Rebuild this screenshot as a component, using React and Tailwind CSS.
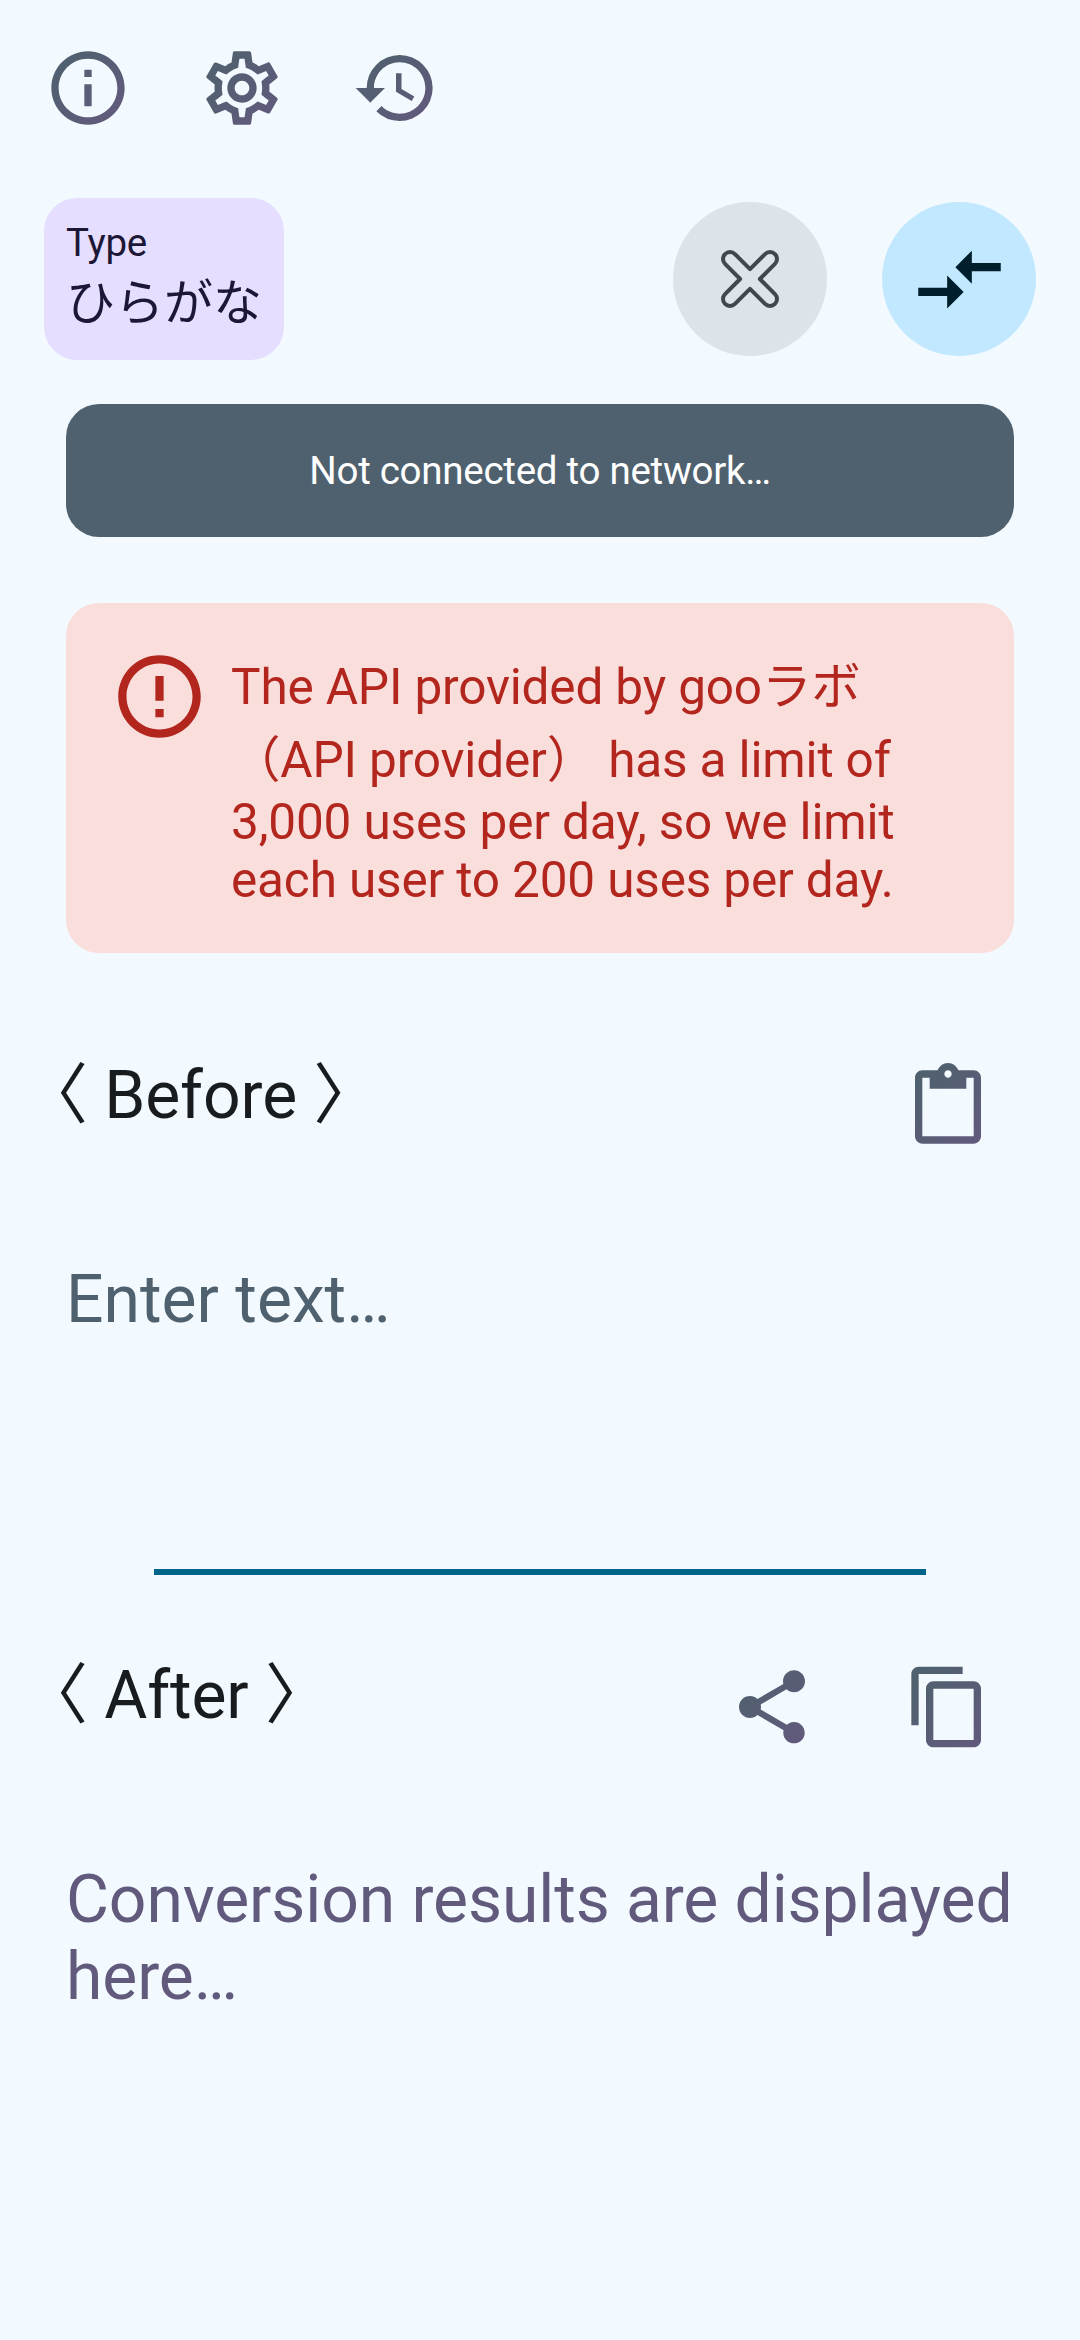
import React from "react";
import {
  MdOutlineInfo,
  MdOutlineSettings,
  MdHistory,
  MdCompareArrows,
  MdErrorOutline,
  MdContentPaste,
  MdShare,
  MdContentCopy,
} from "react-icons/md";

const FONT = "font-['Roboto','Noto_Sans_CJK_JP',sans-serif]";

function IconGradient() {
  return (
    <svg width="0" height="0" className="absolute" aria-hidden="true">
      <defs>
        <linearGradient id="iconTint" gradientUnits="userSpaceOnUse" x1="4" y1="4" x2="20" y2="20">
          <stop offset="0" stopColor="#4F616E" />
          <stop offset="1" stopColor="#615A7C" />
        </linearGradient>
      </defs>
    </svg>
  );
}

function IconButton({ icon: Icon, label }) {
  return (
    <button aria-label={label} className="block size-[88px] shrink-0">
      <Icon className="size-[88px] fill-[url(#iconTint)]" />
    </button>
  );
}

function ClearIcon() {
  return (
    <svg
      viewBox="0 0 66 66"
      className="size-[66px] fill-none stroke-[#41484D]"
      strokeWidth="4"
      strokeLinejoin="round"
    >
      <path d="M33 23.1 48.05 8.05A7 7 0 0 1 57.95 17.95L42.9 33 57.95 48.05A7 7 0 0 1 48.05 57.95L33 42.9 17.95 57.95A7 7 0 0 1 8.05 48.05L23.1 33 8.05 17.95A7 7 0 0 1 17.95 8.05Z" />
    </svg>
  );
}

function SectionHeader({ title, children }) {
  return (
    <div className="flex h-[99px] items-start justify-between pl-[22px] pr-[88px]">
      <h2 className="text-[66px] leading-[87px] tracking-[-0.1px] whitespace-nowrap text-[#191C1E]">{title}</h2>
      <div className="mt-[10.5px] flex gap-[88px]">{children}</div>
    </div>
  );
}

export default function App() {
  return (
    <div className={`flex h-[2340px] w-[1080px] flex-col overflow-hidden bg-[#F3FAFF] ${FONT}`}>
      <IconGradient />

      <nav className="flex gap-[66px] pt-11 pl-11">
        <IconButton icon={MdOutlineInfo} label="Info" />
        <IconButton icon={MdOutlineSettings} label="Settings" />
        <IconButton icon={MdHistory} label="History" />
      </nav>

      <div className="mt-[66px] flex items-center justify-between px-11">
        <button className="flex h-[162px] w-[240px] flex-col items-start rounded-[33px] bg-[#E5DEFF] px-[22px] pt-[22px] text-[#1D1736]">
          <span className="text-[38.5px] leading-[45px] tracking-[-0.2px]">Type</span>
          <span className="text-[49px] leading-[78px] whitespace-nowrap">ひらがな</span>
        </button>
        <div className="flex gap-[55px]">
          <button aria-label="Clear" className="flex size-[154px] items-center justify-center rounded-full bg-[#DCE3E9]">
            <ClearIcon />
          </button>
          <button aria-label="Convert" className="flex size-[154px] items-center justify-center rounded-full bg-[#C1E8FF]">
            <MdCompareArrows className="size-[99px] text-[#001E2C]" />
          </button>
        </div>
      </div>

      <div className="mx-[66px] mt-11 flex h-[133px] items-center justify-center rounded-[33px] bg-[#4F616E]">
        <p className="text-[38.5px] leading-[45px] tracking-[-0.27px] text-white">Not connected to network…</p>
      </div>

      <div className="mx-[66px] mt-[66px] flex h-[350px] gap-[22px] rounded-[33px] bg-[#F9DEDC] p-11 text-[#B3261E]">
        <MdErrorOutline className="size-[99px] shrink-0" />
        <p className="text-[49.5px] tracking-[-0.15px] whitespace-nowrap">
          <span className="block leading-[80px]">The API provided by gooラボ</span>
          <span className="block leading-[66px]">（API provider） has a limit of</span>
          <span className="block leading-[58px]">3,000 uses per day, so we limit</span>
          <span className="block leading-[58px]">each user to 200 uses per day.</span>
        </p>
      </div>

      <section className="mt-[99px]">
        <SectionHeader title="〈 Before 〉">
          <IconButton icon={MdContentPaste} label="Paste" />
        </SectionHeader>
        <p className="mt-[109px] px-[66px] text-[66px] leading-[79px] text-[#4F616E]">Enter text…</p>
      </section>

      <div className="mx-[154px] mt-[230px] h-[5.5px] shrink-0 bg-[#006689]" />

      <section className="mt-[77.5px]">
        <SectionHeader title="〈 After 〉">
          <IconButton icon={MdShare} label="Share" />
          <IconButton icon={MdContentCopy} label="Copy" />
        </SectionHeader>
        <p className="mt-[110px] pl-[66px] text-[66px] leading-[77px] tracking-[-0.1px] whitespace-nowrap text-[#615A7C]">
          Conversion results are displayed
          <br />
          here…
        </p>
      </section>
    </div>
  );
}
